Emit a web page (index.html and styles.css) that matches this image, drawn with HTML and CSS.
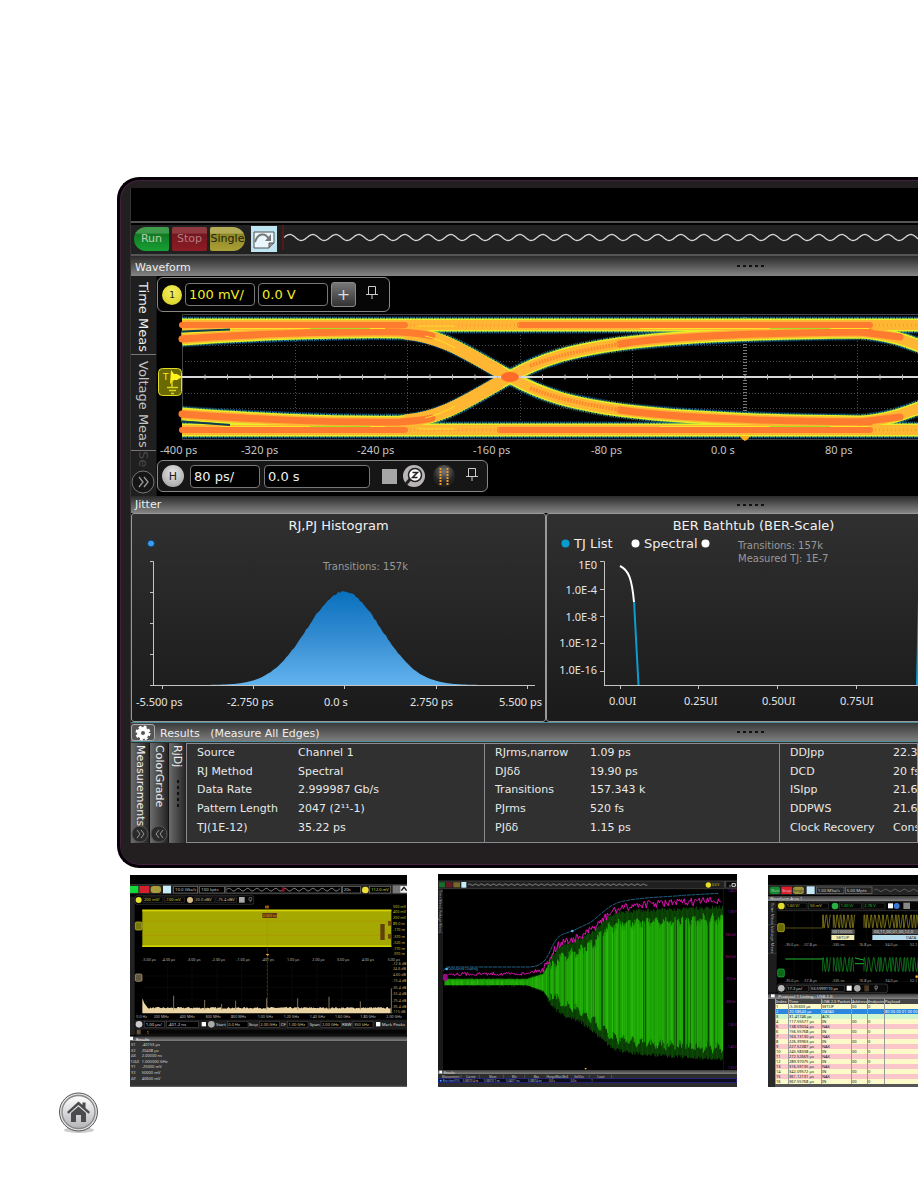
FILE: index.html
```html
<!DOCTYPE html>
<html lang="en">
<head>
<meta charset="utf-8">
<title>Oscilloscope displays</title>
<link rel="stylesheet" href="styles.css">
</head>
<body>
<main class="page">
  <section class="device">
    <div class="screen">
      <div class="topbar"></div>
      <div class="toolbar">
        <button class="run run-go">Run</button>
        <button class="run run-stop">Stop</button>
        <button class="run run-single">Single</button>
        <button class="touch" aria-label="Touch">
          <svg width="26" height="24"><path d="M3 5h20v11l-5 5H3z" fill="#e9f6fb" stroke="#555"/><path d="M18 21v-5h5" fill="#999" stroke="#555"/><path d="M4 15C7 6 14 5 18 12" fill="none" stroke="#777" stroke-width="2"/><path d="M20 7v7h-6z" fill="#777"/></svg>
        </button>
        <svg class="memory"><path d="M1 0V25" stroke="#8a1010" stroke-width="1"/><path id="sine" fill="none" stroke="#d4d4d4" stroke-width="1.3"/></svg>
      </div>

      <header class="bar"><h2 class="bar-title">Waveform</h2><span class="grip"></span></header>
      <div class="wave">
        <nav class="tabs">
          <button class="tab">Time Meas</button>
          <button class="tab tab-volt">Voltage Meas</button>
          <button class="tab tab-dim">Se</button>
          <button class="more" aria-label="More tabs"><svg width="24" height="24"><circle cx="12" cy="12" r="11" fill="#151515" stroke="#777"/><path d="M8 7l4 5-4 5M13 7l4 5-4 5" fill="none" stroke="#999" stroke-width="1.3"/></svg></button>
        </nav>
        <div class="wave-main">
          <div class="ctl ctl-ch">
            <span class="knob knob-ch">1</span>
            <input class="field field-sm" value="100 mV/" aria-label="Vertical scale">
            <input class="field field-sm" value="0.0 V" aria-label="Vertical offset">
            <button class="plus" aria-label="Add">+</button>
            <svg class="pin" width="14" height="16"><path d="M3.500 1.500h7v8h-7zM1 9.500h12M7 10v4" fill="none" stroke="#ccc"/></svg>
          </div>
          <svg class="eye">
            <defs>
              <g id="traces" fill="none">
                <path d="M182 325H1000M182 430H1000"/>
                <path d="M182 339C230 335 330 331 400 332C440 334 462 350 510 377C545 397 575 403 605 408C650 415 730 421 860 422C890 420 905 413 935 402L1000 370"/>
                <path d="M182 414C230 418 330 423 400 422C440 420 462 404 510 377C545 357 575 351 605 346C650 339 730 333 860 332C890 334 905 340 935 352L1000 384"/>
              </g>
            </defs>
            <g transform="translate(-157 -312)">
              <g stroke="#4a4a4a" fill="none" stroke-dasharray="1 2"><path d="M182 345.500H1000M182 361.500H1000M182 393.500H1000M182 408.500H1000M295.500 314V439M407.500 314V439M520.500 314V439M632.500 314V439M857.500 314V439"/></g>
              <path d="M745 314V439" stroke="#777" stroke-width="4" stroke-dasharray="1 2"/>
              <path d="M1000 314.500H182.500V439.500H1000" fill="none" stroke="#444"/>
              <use href="#traces" stroke="#174a80" stroke-width="17" stroke-dasharray="1 1"/>
              <use href="#traces" stroke="#2f8f70" stroke-width="15" stroke-dasharray="2 1"/>
              <use href="#traces" stroke="#e8ee28" stroke-width="13"/>
              <use href="#traces" stroke="#ffb733" stroke-width="10"/>
              <path d="M405 333C440 336 465 352 500 372M405 421C440 418 465 402 500 382" fill="none" stroke="#ffb733" stroke-width="13"/>
              <g fill="none" stroke="#ff7b30" stroke-width="7" stroke-linecap="round">
                <path d="M182 325H405M520 325H870M182 430H405M500 430H870" stroke-width="6"/>
                <path d="M182 339C230 335 330 331 400 332C415 333 424 334 432 336M182 414C230 418 330 423 400 422C415 421 424 420 432 418M860 332L900 337M860 422L900 417"/>
                <path d="M620 410C660 416 730 421 870 422M620 344C660 338 730 333 870 332"/>
                <path d="M530 388C560 400 585 404 620 410M530 366C560 354 585 350 620 344" stroke="#ff8a32" stroke-width="4" stroke-linecap="butt" stroke-dasharray="2 1"/>
                <path d="M410 325H520M410 430H500M875 325H930M875 430H930" stroke="#ff9a35" stroke-width="3" stroke-linecap="butt" stroke-dasharray="1 3"/>
              </g>
              <path d="M418 326L455 326M425 336C438 339 446 343 455 348M418 429L455 429M425 418C438 415 446 411 455 406M220 328.500H385M220 426.500H385M640 328.500H869M660 426.500H869" fill="none" stroke="#ffe02a"/>
              <path d="M310 328.500H370M770 328.500H830M310 426.500H370M770 426.500H830" stroke="#a8e020"/>
              <path d="M182 331.500L230 329.500M182 421.500L230 425" stroke="#123c50" stroke-width="2"/>
              <path d="M182 377H1000" stroke="#d8d8d8" stroke-width="2"/>
              <path d="M204.500 377H1000" stroke="#bbb" stroke-width="5" stroke-dasharray="1 21.500"/>
              <ellipse cx="510" cy="377" rx="9" ry="5" fill="#ff6a28"/>
              <path d="M740 436h10l-2 3-3 2-3-2z" fill="#ffae1a"/>
              <rect x="158.500" y="368.500" width="23" height="27" rx="4" fill="#6b6a00" stroke="#e0dc20"/>
              <text x="163" y="380" font-size="9" fill="#f5ef30">T</text>
              <path d="M171 370l3 4h3l5 3-5 3h-3l-4 4z" fill="#fff21a"/>
              <path d="M172 380v7M167 387.500h11M169 390.500h7M171 393.500h3" fill="none" stroke="#d8d420" stroke-width="1.500"/>
              <g class="axis">
                <text x="160" y="454">-400 ps</text><text x="241" y="454">-320 ps</text><text x="357" y="454">-240 ps</text><text x="473" y="454">-160 ps</text><text x="591" y="454">-80 ps</text><text x="711" y="454">0.0 s</text><text x="825" y="454">80 ps</text>
              </g>
            </g>
          </svg>
          <div class="ctl ctl-h">
            <span class="knob knob-h">H</span>
            <input class="field field-sm" value="80 ps/" aria-label="Time scale">
            <input class="field field-lg" value="0.0 s" aria-label="Time position">
            <span class="swatch"></span>
            <button class="icon" aria-label="Zoom"><svg width="24" height="24"><circle cx="12" cy="12" r="11" fill="#b9b4b6"/><path d="M9 14l-5 6" stroke="#222" stroke-width="3"/><circle cx="13" cy="11" r="6.500" fill="#fff" stroke="#222" stroke-width="1.500"/><path d="M10.500 8.500h5l-5 5h5" fill="none" stroke="#222" stroke-width="1.500"/></svg></button>
            <button class="icon" aria-label="Markers"><svg width="24" height="24"><defs><radialGradient id="ball" cy=".3"><stop offset="0" stop-color="#777"/><stop offset="1" stop-color="#222"/></radialGradient></defs><circle cx="12" cy="12" r="11" fill="url(#ball)"/><path d="M8.500 4v17M15.500 4v17" stroke="#f09a28" stroke-width="2" stroke-dasharray="2 1"/></svg></button>
            <svg class="pin" width="14" height="16"><path d="M3.500 1.500h7v8h-7zM1 9.500h12M7 10v4" fill="none" stroke="#ccc"/></svg>
          </div>
        </div>
      </div>

      <header class="bar bar-jitter"><h2 class="bar-title">Jitter</h2><span class="grip"></span></header>
      <div class="jitter">
        <section class="panel">
          <h3 class="panel-title">RJ,PJ Histogram</h3>
          <svg class="chart">
            <defs><linearGradient id="hist" x2="0" y2="1"><stop offset="0" stop-color="#0870bd"/><stop offset=".55" stop-color="#3a90d4"/><stop offset="1" stop-color="#62b4ee"/></linearGradient></defs>
            <g transform="translate(-132 -537)">
              <circle cx="151" cy="543.500" r="3.500" fill="#3c9af0" stroke="#0b3a66"/>
              <path id="bell" fill="url(#hist)"/>
              <path d="M150 561.500h3.500V685M150 592.500h3M150 623.500h3M150 654.500h3M150 685.500H535M162.500 685v4M253.500 685v4M344.500 685v4M436.500 685v4M527.500 685v4" fill="none" stroke="#c4c4c4"/>
              <text class="note" x="323" y="570">Transitions: 157k</text>
              <g class="axis axis-lit"><text x="136" y="706">-5.500 ps</text><text x="227" y="706">-2.750 ps</text><text x="324" y="706">0.0 s</text><text x="410" y="706">2.750 ps</text><text x="499" y="706">5.500 ps</text></g>
            </g>
          </svg>
        </section>
        <section class="panel">
          <h3 class="panel-title">BER Bathtub (BER-Scale)</h3>
          <svg class="chart">
            <g transform="translate(-547 -537)">
              <circle cx="565.500" cy="543.500" r="4" fill="#0a9bd0"/><circle cx="635.500" cy="543.500" r="4" fill="#fff"/><circle cx="705.500" cy="543.500" r="4" fill="#fff"/>
              <g class="legend"><text x="574" y="548">TJ List</text><text x="644" y="548">Spectral</text></g>
              <text class="note" x="738" y="549">Transitions: 157k</text>
              <text class="note" x="738" y="562">Measured TJ: 1E-7</text>
              <path d="M600 561.500h4.500V685M600 589.500h4M600 616.500h4M600 643.500h4M600 671.500h4M604 685.500H1000M620.500 685v4M698.500 685v4M777.500 685v4M856.500 685v4" fill="none" stroke="#c4c4c4"/>
              <path d="M634 601L638.500 685M919 600L917 685" stroke="#0d9ccf" stroke-width="2"/>
              <path d="M620 566C629 570 632 580 634 602" fill="none" stroke="#fff" stroke-width="2"/>
              <g class="axis axis-lit axis-y"><text x="597" y="569">1E0</text><text x="597" y="594">1.0E-4</text><text x="597" y="621">1.0E-8</text><text x="597" y="647">1.0E-12</text><text x="597" y="674">1.0E-16</text></g>
              <g class="axis axis-lit"><text x="609" y="705">0.0UI</text><text x="684" y="705">0.25UI</text><text x="762" y="705">0.50UI</text><text x="840" y="705">0.75UI</text></g>
            </g>
          </svg>
        </section>
      </div>

      <header class="bar bar-results">
        <button class="gear" aria-label="Settings"><svg width="22" height="16"><circle cx="11" cy="8" r="4" fill="none" stroke="#fff" stroke-width="4"/><circle cx="11" cy="8" r="6" fill="none" stroke="#fff" stroke-width="3" stroke-dasharray="2.700 2"/></svg></button>
        <h2 class="bar-title">Results &nbsp; (Measure All Edges)</h2><span class="grip"></span>
      </header>
      <div class="results">
        <nav class="vtabs">
          <button class="vtab">Measurements<svg class="chev" width="18" height="18"><circle cx="9" cy="9" r="8" fill="#2a2a2a" stroke="#555"/><path d="M6 5l3 4-3 4M10 5l3 4-3 4" fill="none" stroke="#999"/></svg></button>
          <button class="vtab">ColorGrade<svg class="chev" width="18" height="18"><circle cx="9" cy="9" r="8" fill="#2a2a2a" stroke="#555"/><path d="M9 5L6 9l3 4M13 5l-3 4 3 4" fill="none" stroke="#999"/></svg></button>
          <button class="vtab">RjDj<span class="vgrip"></span></button>
        </nav>
        <div class="cell"><table class="data data-a">
          <tr><th>Source</th><td>Channel 1</td></tr><tr><th>RJ Method</th><td>Spectral</td></tr><tr><th>Data Rate</th><td>2.999987 Gb/s</td></tr><tr><th>Pattern Length</th><td>2047 (2¹¹-1)</td></tr><tr><th>TJ(1E-12)</th><td>35.22 ps</td></tr>
        </table></div>
        <div class="cell"><table class="data data-b">
          <tr><th>RJrms,narrow</th><td>1.09 ps</td></tr><tr><th>DJδδ</th><td>19.90 ps</td></tr><tr><th>Transitions</th><td>157.343 k</td></tr><tr><th>PJrms</th><td>520 fs</td></tr><tr><th>PJδδ</th><td>1.15 ps</td></tr>
        </table></div>
        <div class="cell"><table class="data data-c">
          <tr><th>DDJpp</th><td>22.3</td></tr><tr><th>DCD</th><td>20 fs</td></tr><tr><th>ISIpp</th><td>21.6</td></tr><tr><th>DDPWS</th><td>21.6</td></tr><tr><th>Clock Recovery</th><td>Cons</td></tr>
        </table></div>
      </div>
    </div>
  </section>

  <section class="thumbs">
    <svg class="thumb thumb-a" viewBox="15 15 831 636">
      <defs><linearGradient id="tbar" x2="0" y2="1"><stop offset="0" stop-color="#3a3a3a"/><stop offset="1" stop-color="#858585"/></linearGradient></defs>
      <rect x="15" y="15" width="831" height="636" fill="#000"/>
      <rect x="15" y="45" width="831" height="28" fill="#242424"/>
      <path d="M15 44H846" stroke="#555" stroke-width="2"/>
      <rect x="15" y="80" width="14" height="415" fill="#222"/>
      <rect x="15" y="48" width="25" height="21" fill="#12d83a"/><rect x="43" y="48" width="30" height="21" fill="#d41f2c"/><rect x="77" y="48" width="31" height="21" rx="8" fill="#a89c3c"/><rect x="114" y="47" width="24" height="23" fill="#c8ecf8"/>
      <g fill="#000" stroke="#777" stroke-width="2"><rect x="146" y="49" width="72" height="20"/><rect x="224" y="49" width="74" height="20"/><rect x="303" y="49" width="346" height="20"/><rect x="652" y="49" width="54" height="20"/><rect x="733" y="49" width="64" height="20"/></g>
      <path id="tsine-a" fill="none" stroke="#ccc" stroke-width="2"/>
      <rect x="471" y="52" width="8" height="13" fill="#8a1020"/>
      <circle cx="721" cy="60" r="10" fill="#eee23a"/>
      <rect x="803" y="46" width="43" height="24" fill="#777"/><rect x="826" y="48" width="20" height="20" fill="#eee"/><path d="M829 62l8-10 8 10" stroke="#111" stroke-width="4" fill="none"/>
      <g font-size="13" fill="#ccc"><text x="150" y="63">10.0 GSa/s</text><text x="229" y="63">100 kpts</text><text x="656" y="63">20s</text></g>
      <text x="739" y="64" font-size="12" fill="#ddd83a">112.0 mV</text>
      <rect x="30" y="77" width="356" height="26" rx="5" fill="#050505" stroke="#777"/>
      <circle cx="41" cy="90" r="9" fill="#e8df30"/><circle cx="195" cy="90" r="9" fill="#d8bd88"/>
      <g fill="none" stroke="#555"><rect x="54" y="81" width="60" height="17"/><rect x="118" y="81" width="60" height="17"/><rect x="208" y="81" width="62" height="17"/><rect x="273" y="81" width="62" height="17"/></g>
      <g font-size="12"><g fill="#d8d030"><text x="57" y="94">200 mV/</text><text x="121" y="94">-100 mV</text></g><g fill="#dcc392"><text x="211" y="94">20.0 dBV</text><text x="276" y="94">-75.4 dBV</text></g></g>
      <rect x="342" y="81" width="17" height="17" fill="#aaa"/><path d="M372 83h8v8h-8zM376 91v6" fill="none" stroke="#888" stroke-width="2"/>
      <rect x="52" y="119" width="747" height="112" fill="#a5a800"/><rect x="52" y="119" width="747" height="5" fill="#d2d300"/><rect x="52" y="226" width="747" height="5" fill="#d2d300"/>
      <path d="M52 153H799M52 196H799M427 105V430" stroke="#b88400" stroke-width="2" stroke-dasharray="2 2"/>
      <rect x="412" y="129" width="44" height="15" fill="#5f3d08"/><text x="413" y="141" font-size="11" fill="#e49a32">2.000 ns</text>
      <rect x="420" y="107" width="12" height="8" fill="#9a5310"/>
      <rect x="766" y="162" width="13" height="48" fill="#61400b"/><rect x="789" y="153" width="10" height="14" fill="#6e4a0a"/><rect x="789" y="192" width="10" height="14" fill="#6e4a0a"/>
      <rect x="31" y="156" width="20" height="24" rx="4" fill="#77780a" stroke="#d0cc28" stroke-width="2"/><rect x="31" y="312" width="20" height="22" rx="4" fill="#5f5540" stroke="#c5aa75" stroke-width="2"/>
      <path d="M422 252h11l-5 6z" fill="#ffad22"/>
      <g font-size="11" fill="#c8c024"><text x="804" y="113">500 mV</text><text x="804" y="129">400 mV</text><text x="804" y="146">200 mV</text><text x="804" y="164">89.0 m</text><text x="804" y="184">-170 m</text><text x="804" y="203">-370 m</text><text x="804" y="221">-520 m</text><text x="804" y="241">-770 m</text><text x="804" y="254">-970 m</text></g>
      <g font-size="11" fill="#c7aa74"><text x="802" y="285">-12.6 dB</text><text x="804" y="301">24.6 dB</text><text x="804" y="319">4.60 dB</text><text x="802" y="337">-15.4 dB</text><text x="802" y="357">-35.4 dB</text><text x="802" y="375">-55.4 dB</text><text x="802" y="395">-75.4 dB</text><text x="802" y="413">-95.4 dB</text><text x="802" y="429">-115 dB</text></g>
      <g font-size="11" fill="#bbb"><text x="52" y="272">-5.00 µs</text><text x="110" y="272">-4.00 µs</text><text x="186" y="272">-3.00 µs</text><text x="260" y="272">-2.00 µs</text><text x="334" y="272">-1.00 µs</text><text x="410" y="272">-401 ps</text><text x="486" y="272">1.00 µs</text><text x="562" y="272">2.00 µs</text><text x="636" y="272">3.00 µs</text><text x="710" y="272">4.00 µs</text><text x="788" y="272">5.00 µs</text>
      <text x="34" y="443">0.0 Hz</text><text x="86" y="443">200 MHz</text><text x="164" y="443">400 MHz</text><text x="242" y="443">600 MHz</text><text x="318" y="443">800 MHz</text><text x="398" y="443">1.00 GHz</text><text x="476" y="443">1.20 GHz</text><text x="554" y="443">1.40 GHz</text><text x="630" y="443">1.60 GHz</text><text x="706" y="443">1.80 GHz</text><text x="784" y="443">2.00 GHz</text></g>
      <path d="M52 318H799M52 352H799M52 390H799M127 280V430M201 280V430M276 280V430M350 280V430M501 280V430M576 280V430M650 280V430M725 280V430" stroke="#1c1c1c" fill="none"/>
      <path id="noise" fill="#ecd5a5"/>
      <path d="M146 377V420M239 390V420M290 402V420M332 392V420M425 385V420M518 385V420M612 380V420M706 394V420M799 355V430" stroke="#9d8b66" stroke-width="2.500"/>
      <rect x="30" y="449" width="816" height="27" fill="#1c1c1c"/>
      <circle cx="42" cy="463" r="10" fill="#ccc"/><circle cx="259" cy="463" r="10" fill="#aaa"/><rect x="230" y="456" width="13" height="13" fill="#fff"/><rect x="753" y="456" width="13" height="13" fill="#fff"/>
      <g fill="#000" stroke="#777"><rect x="58" y="454" width="60" height="18"/><rect x="124" y="454" width="96" height="18"/><rect x="307" y="454" width="62" height="18"/><rect x="403" y="454" width="60" height="18"/><rect x="487" y="454" width="62" height="18"/><rect x="588" y="454" width="60" height="18"/><rect x="684" y="454" width="60" height="18"/></g>
      <g font-size="13" fill="#ddd"><text x="62" y="468">1.00 µs/</text><text x="128" y="468">-401.2 ns</text><text x="273" y="468">Start</text><text x="371" y="468">Stop</text><text x="467" y="468">CF</text><text x="554" y="468">Span</text><text x="651" y="468">RBW</text><text x="770" y="468">Mark Peaks</text></g>
      <g font-size="12" fill="#dcc392"><text x="310" y="468">0.0 Hz</text><text x="406" y="468">2.00 GHz</text><text x="490" y="468">1.00 GHz</text><text x="591" y="468">2.00 GHz</text><text x="687" y="468">350 kHz</text></g>
      <rect x="30" y="477" width="816" height="18" rx="5" fill="#060606" stroke="#555"/><rect x="35" y="479" width="12" height="14" fill="#6b5238"/><text x="65" y="491" font-size="12" fill="#ccc">1</text>
      <rect x="15" y="499" width="831" height="15" fill="url(#tbar)"/><text x="33" y="512" font-size="12" fill="#fff">Results</text><rect x="15" y="500" width="9" height="10" fill="#fff"/>
      <rect x="15" y="515" width="831" height="136" fill="#323232"/>
      <g font-size="12" fill="#d4d4d4"><text x="18" y="528">X1</text><text x="50" y="528">-40153 µs</text><text x="18" y="545">X2</text><text x="50" y="545">20438 µs</text><text x="18" y="562">ΔX</text><text x="50" y="562">2.00000 ns</text><text x="16" y="579">1/ΔX</text><text x="50" y="579">1.000000 GHz</text><text x="18" y="595">Y1</text><text x="50" y="595">-25000 mV</text><text x="18" y="612">Y2</text><text x="50" y="612">50000 mV</text><text x="18" y="629">ΔY</text><text x="50" y="629">40600 mV</text></g>
      <path d="M15 649H846" stroke="#666" stroke-width="3"/>
    </svg>

    <svg class="thumb thumb-b" viewBox="24 12 897 639">
      <rect x="24" y="12" width="897" height="639" fill="#000"/>
      <rect x="24" y="33" width="897" height="22" fill="#202020"/><path d="M24 33H921M24 56H921" stroke="#555" stroke-width="2"/>
      <rect x="27" y="37" width="18" height="15" fill="#13702a"/><rect x="48" y="37" width="19" height="15" fill="#6c1720"/><rect x="70" y="37" width="20" height="15" fill="#756a26"/><rect x="94" y="36" width="15" height="17" fill="#c8ecf8"/>
      <path id="tsine-b" fill="none" stroke="#bbb" stroke-width="2"/>
      <circle cx="835" cy="45" r="8" fill="#e8dd20"/><text x="845" y="49" font-size="10" fill="#ddd020">0.0 V</text><rect x="884" y="34" width="2" height="19" fill="#888"/><rect x="888" y="35" width="32" height="18" fill="#0a0a0a" stroke="#555"/><path d="M898 48h4M906 41h10v8h-10z" stroke="#ddd" stroke-width="3"/>
      <rect x="24" y="57" width="15" height="544" fill="#191919"/><path d="M24 116h15M24 188h15" stroke="#777"/>
      <g font-size="11" fill="#aaa"><text transform="translate(28 60) rotate(90)">Time Meas</text><text transform="translate(28 119) rotate(90)">Voltage Meas</text></g>
      <rect x="880" y="57" width="1" height="544" fill="#333"/>
      <path id="burst-dark" stroke="#0c4a06" stroke-width="3" fill="none"/>
      <path id="burst" stroke="#20b408" stroke-width="2.800" fill="none"/>
      <path id="burst-lite" stroke="#3ad618" stroke-width="1" fill="none"/>
      <path id="env" stroke="#e012b4" stroke-width="3" fill="none"/>
      <path d="M40 302L50 291H300C330 289 345 275 355 255C370 220 380 200 400 192L427 183L480 158C510 138 530 108 570 96C620 82 700 82 760 76L865 70" fill="none" stroke="#27729a" stroke-width="2.500" stroke-dasharray="12 2"/>
      <circle cx="427" cy="183" r="4" fill="#4fb6ed"/><circle cx="50" cy="297" r="4" fill="#4fb6ed"/><text x="54" y="301" font-size="10" fill="#3c9dcc">Calculated Loading</text>
      <rect x="39" y="312" width="14" height="20" rx="4" fill="#9a0a83"/>
      <g font-size="9" fill="#b0149a"><text x="894" y="67">1.40 V</text><text x="894" y="129">1.05 V</text><text x="886" y="197">700 mV</text><text x="886" y="264">350 mV</text><text x="886" y="331">-75.0 m</text><text x="886" y="399">-350 m</text><text x="891" y="467">-1.05 V</text><text x="891" y="535">-1.40 V</text><text x="891" y="597">-1.75 V</text></g>
      <path d="M463 594h8l-4 5z" fill="#ffa51f"/>
      <rect x="24" y="600" width="897" height="13" fill="url(#tbar)"/><rect x="28" y="602" width="8" height="8" fill="#fff"/><text x="41" y="611" font-size="10" fill="#ddd">Results</text>
      <rect x="24" y="613" width="897" height="38" fill="#2d2d2d"/><rect x="25" y="626" width="895" height="12" fill="#0d0d1b" stroke="#2626a8" stroke-width="2"/>
      <path d="M93 614v11M148 614v11M220 614v11M284 614v11M349 614v11M413 614v11M478 614v11M545 614v11" stroke="#999"/>
      <g font-size="8" fill="#ccc"><text x="36" y="623">Measurement</text><text x="108" y="623">Current</text><text x="178" y="623">Mean</text><text x="246" y="623">Min</text><text x="311" y="623">Max</text><text x="352" y="623">Range(Max-Min)</text><text x="433" y="623">Std Dev</text><text x="501" y="623">Count</text>
      <text x="38" y="635" fill="#70baf2">Rise time(f10)</text><text x="98" y="635">5.06010 4 ns</text><text x="162" y="635">5.06010 1 ns</text><text x="228" y="635">5.04011 ns</text><text x="294" y="635">5.08014 ns</text><text x="357" y="635">0.0 s</text><text x="422" y="635">0.0 s</text><text x="484" y="635">1</text></g><circle cx="32" cy="632" r="3" fill="#3bb5ff"/>
    </svg>

    <div class="thumb thumb-c">
      <svg class="decode">
        <g transform="scale(.33333) translate(-24 -15)">
        <rect x="24" y="15" width="1200" height="380" fill="#000"/><rect x="24" y="47" width="1200" height="28" fill="#242424"/><path d="M24 46H1200" stroke="#555" stroke-width="2"/>
        <rect x="29" y="50" width="31" height="22" rx="6" fill="#158a32"/><rect x="64" y="50" width="32" height="22" fill="#e01f28"/><rect x="99" y="50" width="33" height="22" rx="8" fill="#9c9238"/><rect x="140" y="49" width="24" height="23" fill="#c4e8f5"/>
        <g font-size="13" fill="#ccc"><text x="34" y="66" fill="#9c9">Run</text><text x="66" y="66">Stop</text><text x="99" y="66" font-size="12" fill="#333">Single</text><text x="173" y="67">1.00 MSa/s</text><text x="260" y="67">5.00 Mpts</text></g><g fill="none" stroke="#777" stroke-width="2"><rect x="170" y="51" width="82" height="20"/><rect x="256" y="51" width="80" height="20"/></g>
        <path d="M342 61q7-8 14 0t14 0t14 0t14 0t14 0t14 0t14 0t14 0t14 0t14 0t14 0t14 0t14 0" fill="none" stroke="#777" stroke-width="2"/>
        <rect x="24" y="78" width="1200" height="15" fill="url(#tbar)"/><text x="30" y="91" font-size="12" fill="#ddd">Waveform Area 1</text>
        <rect x="24" y="94" width="26" height="274" fill="#1d1d1d"/><path d="M24 164h26M24 250h26" stroke="#777"/><g font-size="13" fill="#bbb"><text transform="translate(32 98) rotate(90)">Time Meas</text><text transform="translate(32 168) rotate(90)">Voltage Meas</text></g>
        <rect x="53" y="95" width="440" height="27" rx="6" fill="#050505" stroke="#888"/><circle cx="64" cy="108" r="10" fill="#e2db2e"/><circle cx="225" cy="108" r="10" fill="#28b040"/><rect x="384" y="100" width="15" height="15" fill="#fff"/><circle cx="410" cy="108" r="9" fill="#3a7ad0"/><rect x="430" y="98" width="20" height="19" fill="#888"/>
        <g fill="none" stroke="#666"><rect x="77" y="99" width="64" height="18"/><rect x="146" y="99" width="60" height="18"/><rect x="238" y="99" width="66" height="18"/><rect x="309" y="99" width="66" height="18"/></g>
        <g font-size="12"><g fill="#c8c030"><text x="80" y="112">1.60 V/</text><text x="150" y="112">50 mV</text></g><g fill="#28c040"><text x="242" y="112">1.00 V/</text><text x="313" y="112">2.76 V</text></g></g>
        <path d="M60 226H474M60 334H474M102 125V215M157 125V215M244 125V215M320 125V215M396 125V215M102 240V325M157 240V325M244 240V325M320 240V325M396 240V325" fill="none" stroke="#1e1e1e"/>
        <path d="M76 174H188" stroke="#7d7516" stroke-width="2"/><path id="usb-y" fill="none" stroke="#a79b20" stroke-width="2"/>
        <path d="M76 267H188" stroke="#22b82e" stroke-width="3"/><path d="M285 264l26 6M285 281h26" stroke="#22b82e" stroke-width="3"/><path id="usb-g" fill="none" stroke="#179827" stroke-width="2"/>
        <rect x="53" y="161" width="20" height="24" rx="4" fill="#6b6a00" stroke="#c8c428" stroke-width="2"/><rect x="53" y="297" width="20" height="24" rx="4" fill="#0a6a1a" stroke="#28b040" stroke-width="2"/>
        <rect x="214" y="178" width="70" height="15" fill="#555"/><rect x="214" y="195" width="69" height="15" fill="#f3eeb8"/><rect x="337" y="178" width="800" height="15" fill="#555"/><rect x="337" y="195" width="800" height="15" fill="#b5dcec"/>
        <g font-size="13" fill="#ddd"><text x="217" y="190">00100000</text><text x="342" y="190">00,11,00,01,00,12,0</text></g><g font-size="13" fill="#333"><text x="229" y="207">SETUP</text><text x="438" y="207">DATA</text></g>
        <g font-size="11" fill="#aaa"><text x="75" y="228">-95.0 µs</text><text x="130" y="228">-57.8 µs</text><text x="216" y="228">-535 ns</text><text x="297" y="228">16.8 µs</text><text x="376" y="228">34.0 µs</text><text x="450" y="228">52.1</text><text x="75" y="336">-95.0 µs</text><text x="130" y="336">-57.8 µs</text><text x="216" y="336">-535 ns</text><text x="297" y="336">16.8 µs</text><text x="376" y="336">34.0 µs</text><text x="450" y="336">52.1</text></g>
        <circle cx="470" cy="320" r="4" fill="#ffa51f"/>
        <rect x="53" y="342" width="330" height="26" rx="6" fill="#090909" stroke="#888"/><circle cx="64" cy="355" r="10" fill="#bbb"/><g fill="none" stroke="#777"><rect x="78" y="346" width="68" height="18"/><rect x="150" y="346" width="104" height="18"/></g><g font-size="12" fill="#ddd"><text x="82" y="359">17.3 µs/</text><text x="153" y="359">53.5999110 µs</text></g><rect x="260" y="347" width="15" height="15" fill="#fff"/><circle cx="292" cy="355" r="10" fill="#aaa"/><rect x="313" y="346" width="14" height="18" fill="#4e3826"/><path d="M345 348h7v8h-7zM348 356v6" fill="none" stroke="#aaa" stroke-width="2"/>
        <rect x="24" y="371" width="1200" height="16" fill="url(#tbar)"/><rect x="33" y="373" width="11" height="9" fill="#fff"/><text x="55" y="384" font-size="13" fill="#eee">Protocol 1 Listing : USB 2.0</text>
        </g>
      </svg>
      <table class="listing">
        <thead><tr><th class="c1">Index</th><th class="c2">Time</th><th class="c3">USB 2.0 Packet</th><th class="c4">Address</th><th class="c5">Endpoint</th><th>Payload</th></tr></thead>
        <tbody id="packets"></tbody>
      </table>
      <div class="listing-foot"></div>
    </div>
  </section>

  <a class="home" href="#" aria-label="Home">
    <svg width="40" height="42" viewBox="0 0 40 42">
      <defs><linearGradient id="disc" x2="0" y2="1"><stop offset="0" stop-color="#fff"/><stop offset="1" stop-color="#b4b4b8"/></linearGradient></defs>
      <ellipse cx="20" cy="38" rx="15" ry="3" fill="#ccc"/>
      <circle cx="19.500" cy="20" r="19" fill="#e0e0e4" stroke="#555"/><circle cx="19.500" cy="20" r="16.500" fill="url(#disc)" stroke="#888" stroke-width="1.300"/>
      <path d="M8 20L19.500 9.500l4 3.500V10.500h3V16L31 20l-1.500 1.800L19.500 13 9.500 21.800z" fill="#4b4b4f"/><path d="M12 21l7.500-6.500L27 21v9h-5v-7h-5v7h-5z" fill="#4b4b4f"/>
    </svg>
  </a>
</main>
<script src="plots.js"></script>
</body>
</html>
```
FILE: styles.css
```css
* { box-sizing: border-box; }
body { margin: 0; background: #fff; font-family: "DejaVu Sans", sans-serif; font-size: 11px; overflow-x: hidden; }
button { font: inherit; margin: 0; padding: 0; border: 0; background: none; color: inherit; cursor: pointer; }
h2, h3 { margin: 0; font-weight: normal; }
svg { display: block; flex: none; }
svg text { white-space: pre; }
.page { padding-top: 177px; overflow: hidden; }

.device { margin-left: 117px; padding: 8px 0 22px 10px; background: #231f20; border: 3px solid #050005; border-right: 0; border-radius: 22px 0 0 22px; box-shadow: inset 1px 1px 0 #43203f, inset 0 -1px 0 #43203f; }
.screen { background: #000; color: #e6e6e6; overflow: hidden; border-left: 1px solid #333; }
.topbar { height: 35px; border-bottom: 2px solid #555; }

.toolbar { display: flex; align-items: center; height: 31px; margin-top: 2px; padding: 0 0 2px 3px; background: #212121; border-bottom: 2px solid #555; }
.run { height: 24px; width: 35px; margin-right: 3px; }
.run-go { border-radius: 12px 2px 2px 12px; background: linear-gradient(#3f9c4c 0 25%, #117a24 30%, #18a034); color: #b9cfae; }
.run-stop { border-radius: 2px; background: linear-gradient(#8e3a40 0 25%, #74161e 30%, #8c1c26); color: #b77c80; }
.run-single { border-radius: 2px 12px 12px 2px; background: linear-gradient(#b3ab55 0 25%, #8f8726 30%, #a89f36); color: #25240c; }
.touch { width: 26px; height: 26px; margin: 0 5px 0 3px; background: #bfe4f2; }
.memory { flex: 1; height: 27px; min-width: 0; }

.bar { display: flex; align-items: center; height: 20px; background: linear-gradient(#2a2a2a, #858585); }
.bar-title { flex: 0 0 606px; padding: 3px 0 0 4px; font-size: 11px; line-height: 14px; color: #eee; }
.grip { width: 29px; height: 2px; background: repeating-linear-gradient(90deg, #111 0 3px, transparent 3px 6px); }
.bar-jitter { height: 17px; }
.bar-jitter .bar-title { padding-top: 1px; }

.wave { display: flex; height: 220px; }
.tabs { flex: 0 0 26px; display: flex; flex-direction: column; background: #1f1f1f; border-right: 1px solid #111; }
.tab { writing-mode: vertical-rl; width: 25px; height: 79px; font-size: 13px; text-align: left; padding: 6px 1px 0 0; border-bottom: 1px solid #777; color: #eee; }
.tab-volt { height: 96px; color: #c4c4c4; }
.tab-dim { height: 18px; overflow: hidden; color: #484848; border-bottom: 0; padding-top: 0; }
.more { height: 25px; }
.wave-main { flex: 1; min-width: 0; display: flex; flex-direction: column; align-items: flex-start; }
.ctl { display: flex; align-items: center; border: 1px solid #888; border-radius: 6px; background: #060606; }
.ctl-ch { margin-top: 1px; height: 35px; width: 233px; padding-left: 4px; gap: 3px; }
.ctl-h { height: 32px; width: 331px; padding-left: 4px; gap: 4px; background: #161616; }
.knob { display: flex; align-items: center; justify-content: center; border-radius: 50%; color: #222; }
.knob-ch { width: 20px; height: 20px; font-size: 9px; background: radial-gradient(circle at 50% 35%, #f5f060, #d4cc1c); }
.knob-h { width: 22px; height: 22px; margin-right: 2px; background: radial-gradient(circle at 50% 35%, #e6e6e6, #999); }
.field { height: 23px; padding: 0 0 0 3px; font: 13px "DejaVu Sans", sans-serif; color: #f0f0f0; background: #000; border: 1px solid #777; border-radius: 4px; }
.ctl-ch .field { color: #f3ee28; }
.field-sm { width: 70px; }
.field-lg { width: 106px; }
.plus { width: 25px; height: 25px; border: 1px solid #888; border-radius: 3px; background: linear-gradient(#777, #333); font-size: 16px; line-height: 20px; color: #ddd; }
.pin { margin: 0 0 3px 6px; }
.ctl-h .pin { margin-left: 3px; }
.swatch { width: 15px; height: 15px; margin: 0 1px 0 8px; background: #a6a6a6; }
.icon { margin-right: 2px; }
.eye { width: 100%; height: 148px; }
.axis { font: 11px "Noto Sans", sans-serif; fill: #c4c4c4; }
.axis-lit { fill: #e4e4e4; }
.axis-y { text-anchor: end; }
.note { font-size: 10px; fill: #999; }
.legend { font-size: 13px; fill: #eee; }

.jitter { display: grid; grid-template-columns: 415px minmax(415px, 1fr); }
.panel { min-width: 0; border: 1px solid #999; border-radius: 3px; background: linear-gradient(#303030, #1a1a1a); }
.panel-title { height: 23px; padding-top: 4px; font-size: 13px; line-height: 16px; text-align: center; color: #f2f2f2; }
.chart { width: 100%; height: 184px; }

.bar-results { height: 20px; border: solid #4a8e9e; border-width: 1px 0; background: linear-gradient(#3a3a3a, #7d7d7d); }
.gear { width: 24px; height: 17px; border: 1px solid #aaa; border-radius: 3px; background: #555; }
.bar-results .bar-title { flex-basis: 582px; padding-left: 5px; }

.results { display: grid; grid-template-columns: 56px 298px 295px minmax(138px, 1fr); height: 101px; padding-top: 1px; background: #303030; }
.vtabs { display: grid; grid-template-columns: repeat(3, 1fr); background: #111; }
.vtab { writing-mode: vertical-rl; display: flex; align-items: center; justify-content: space-between; padding-top: 2px; background: linear-gradient(90deg, #6c6c6c, #242424); color: #eee; border-right: 1px solid #111; }
.chev { flex: none; margin-top: -3px; }
.vgrip { width: 2px; height: 28px; margin-bottom: 35px; background: repeating-linear-gradient(#111 0 3px, transparent 3px 6px); }
.cell { border: 1px solid #8a8a90; padding: 0 0 0 10px; margin-left: -1px; overflow: hidden; }
.data { height: 93px; border-collapse: collapse; table-layout: fixed; width: 280px; }
.data th, .data td { padding: 0; font-size: 11px; font-weight: normal; text-align: left; white-space: nowrap; color: #e8e8e8; line-height: 14px; }
.data-a th { width: 101px; }
.data-b th { width: 95px; }
.data-c { width: 160px; }
.data-c th { width: 103px; }

.thumbs { display: flex; align-items: flex-start; gap: 31px; margin: 6px 0 0 130px; height: 213px; }
.thumb { flex: none; overflow: hidden; font-family: "Noto Sans", sans-serif; }
.thumb-a { width: 277px; height: 212px; margin-top: 1px; }
.thumb-b { width: 299px; height: 213px; }
.thumb-c { flex: 1 0 150px; min-width: 0; height: 212px; margin-top: 1px; background: #2a2a2a; display: flex; flex-direction: column; }
.decode { width: 100%; height: 124px; }
.listing { margin-left: 7px; width: 200px; table-layout: fixed; border-collapse: collapse; font-size: 4px; line-height: 5px; color: #111; }
.listing th, .listing td { height: 5px; padding: 0; overflow: hidden; white-space: nowrap; font-weight: normal; text-align: left; box-shadow: inset 1px 0 0 #999; text-indent: 1px; }
.listing th { background: #444; color: #eee; }
.c1 { width: 13px; }
.c2 { width: 33px; }
.c3 { width: 30px; }
.c4 { width: 16px; }
.c5 { width: 17px; }
.in { background: #fbfac8; }
.ack { background: #cff5cf; }
.nak { background: #fbc6ca; }
.sel { background: #2b87e0; color: #fff; }
.listing-foot { height: 3px; margin-left: 7px; background: #555; }

.home { display: block; width: 40px; margin: 5px 0 50px 59px; }
```
FILE: plots.js
```js
(() => {
let seed = 7;
const rnd = () => (seed = (seed * 16807) % 2147483647) / 2147483647;
const put = (id, d) => document.getElementById(id).setAttribute("d", d);

function sine(x0, x1, y, amp, period, step) {
  let d = "";
  for (let x = x0; x <= x1; x += step) {
    d += (d ? "L" : "M") + x + " " + (y - amp * Math.sin((x - x0) / period * 2 * Math.PI)).toFixed(1);
  }
  return d;
}
put("sine", sine(2, 1600, 12.5, 3, 23, 1));
put("tsine-a", sine(305, 646, 59, 4, 28, 2));
put("tsine-b", sine(114, 652, 44, 2, 18, 2));

// Histogram of the random and periodic jitter
let bell = "M210 685";
for (let x = 210; x <= 480; x += 2) {
  const h = 93 * Math.exp(-((x - 344) ** 2) / (2 * 37 * 37));
  bell += "L" + x + " " + (685 - h - (rnd() - .5) * h * .03).toFixed(1);
}
put("bell", bell + "L480 685Z");

// Spectrum floor
let floor = "M52 430V385L58 400L66 410";
for (let x = 68; x < 799; x += 3) floor += "L" + x + " " + (416 - rnd() * 5).toFixed(1);
put("noise", floor + "V430Z");

function lerp(points, x) {
  for (let i = 1; i < points.length; i++) {
    if (x <= points[i][0]) {
      const [a, p] = points[i - 1], [b, q] = points[i];
      return p + (q - p) * (x - a) / (b - a);
    }
  }
  return points[points.length - 1][1];
}
const upper = [[45, 328], [290, 328], [340, 312], [370, 258], [390, 235], [450, 215], [490, 190], [530, 150], [570, 132], [700, 125], [880, 118]];
const lower = [[45, 345], [290, 345], [340, 362], [370, 405], [400, 430], [450, 448], [490, 478], [550, 530], [620, 545], [880, 562]];
let dark = "", mid = "", lite = "";
for (let x = 45; x < 879; x += 2.5) {
  const t = lerp(upper, x), b = lerp(lower, x), n = x > 350 ? 12 : 5;
  dark += `M${x} ${t - rnd() * n}V${b + rnd() * n}`;
  const gap = x > 360 ? 18 + 26 * Math.abs(Math.sin(x / 9)) : 0;
  if (x < 350 || rnd() > .18) mid += `M${x} ${t + gap * (.5 + rnd() * .5)}V${b - gap * (.5 + rnd() * .5)}`;
  if (rnd() > .65) lite += `M${x} ${t + gap + 8 * rnd()}V${b - gap}`;
}
put("burst-dark", dark);
put("burst", mid);
put("burst-lite", lite);
const envelope = [[55, 312], [280, 311], [340, 298], [375, 235], [400, 215], [450, 203], [490, 175], [550, 122], [620, 104], [750, 98], [876, 90]];
let env = "";
for (let x = 55; x < 876; x += 3) env += (env ? "L" : "M") + x + " " + (lerp(envelope, x) + (rnd() - .5) * (x > 330 ? 24 : 10)).toFixed(1);
put("env", env);

// Bus bursts: one toggling trace per packet
function bursts(high, low, ranges) {
  let d = "";
  for (const [a, b] of ranges) {
    let up = false;
    d += `M${a} ${low}`;
    for (let x = a; x < b; x += 3 + rnd() * 5) {
      up = !up;
      d += `L${x} ${up ? high : low}L${x + 2} ${up ? high : low}`;
    }
  }
  return d;
}
put("usb-y", bursts(135, 173, [[188, 212], [220, 285], [312, 490]]));
put("usb-g", bursts(263, 304, [[188, 212], [220, 285], [312, 490]]));

const packets = [
  ["-5.05303 µs", "SETUP", "00", "0"], ["20.58643 µs", "DATA0", "", ""], ["31.41746 µs", "ACK", "", ""],
  ["117.55577 µs", "IN", "00", "0"], ["138.59034 µs", "NAK", "", ""], ["156.55768 µs", "IN", "00", "0"],
  ["163.13130 µs", "NAK", "", ""], ["226.39963 µs", "IN", "00", "0"], ["227.52387 µs", "NAK", "", ""],
  ["245.58338 µs", "IN", "00", "0"], ["272.52669 µs", "NAK", "", ""], ["289.97075 µs", "IN", "00", "0"],
  ["316.59135 µs", "NAK", "", ""], ["342.09572 µs", "IN", "00", "0"], ["361.12131 µs", "NAK", "", ""],
  ["367.55768 µs", "IN", "00", "0"]
];
const tone = { NAK: "nak", ACK: "ack", DATA0: "sel" };
document.getElementById("packets").innerHTML = packets.map(([t, p, a, e], i) =>
  `<tr class="${tone[p] || "in"}"><td>${i + 1}</td><td>${t}</td><td>${p}</td><td>${a}</td><td>${e}</td><td>${i === 1 ? "80 06 00 01 00 00" : ""}</td></tr>`).join("");
})();
```
